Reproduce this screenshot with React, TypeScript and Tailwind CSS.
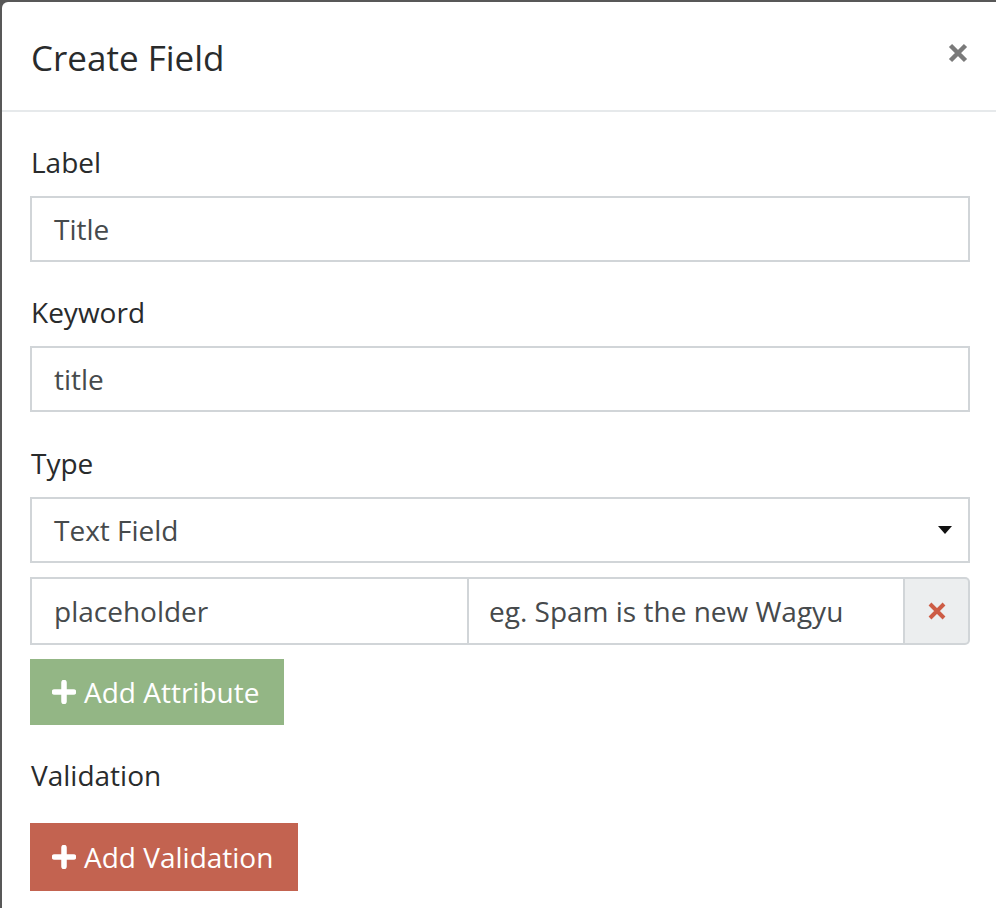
import React from 'react';

const font = { fontFamily: '"Open Sans", "Liberation Sans", sans-serif' };

const PlusIcon = () => (
  <svg width="24" height="24" viewBox="0 0 24 24" className="mr-[8px]">
    <path d="M12 2.5v19M2.5 12h19" stroke="white" strokeWidth="5.5" strokeLinecap="round" />
  </svg>
);

const Label: React.FC<{ children: React.ReactNode; className?: string }> = ({ children, className }) => (
  <div className={`text-[28px] leading-[40px] text-[#292b2c] ${className ?? ''}`}>{children}</div>
);

const TextInput: React.FC<{ value: string }> = ({ value }) => (
  <div className="h-[66px] border-2 border-[#d1d5d8] bg-white px-[22px] flex items-center text-[28px] text-[#464a4c]">
    {value}
  </div>
);

export default function App() {
  return (
    <div className="h-[908px] w-[996px] overflow-hidden bg-[#585858] pt-[2px] pl-[2px]" style={font}>
      <div className="h-[920px] w-[1000px] bg-white rounded-tl-[6px] rounded-tr-[6px]">
        {/* Header */}
        <div className="h-[110px] border-b-2 border-[#e6e9eb] flex items-center justify-between pl-[29px] pr-[30px]">
          <h4 className="text-[35px] text-[#292b2c] leading-none mt-[2px]">Create Field</h4>
          <svg width="20" height="20" viewBox="0 0 20 20" className="-mt-[6px] mr-[4px]">
            <path d="M2.5 2.5l15 15M17.5 2.5l-15 15" stroke="#7a7a7a" strokeWidth="4.5" />
          </svg>
        </div>

        {/* Body */}
        <div className="pl-[28px] pr-[28px] w-[996px] pt-[30px]">
          <Label className="mb-[14px] pl-[1px]">Label</Label>
          <TextInput value="Title" />

          <Label className="mt-[30px] mb-[14px] pl-[1px]">Keyword</Label>
          <TextInput value="title" />

          <Label className="mt-[31px] mb-[14px] pl-[1px]">Type</Label>
          <div className="h-[66px] border-2 border-[#d1d5d8] bg-white pl-[22px] pr-[16px] flex items-center justify-between text-[28px] text-[#464a4c]">
            <span>Text Field</span>
            <svg width="14" height="8" viewBox="0 0 14 8">
              <path d="M0 0h14L7 8z" fill="#111" />
            </svg>
          </div>

          <div className="mt-[14px] flex h-[68px]">
            <div className="w-[439px] border-2 border-[#d1d5d8] px-[22px] flex items-center text-[28px] text-[#464a4c]">
              placeholder
            </div>
            <div className="flex-1 border-2 border-l-0 border-[#d1d5d8] px-[20px] flex items-center text-[28px] text-[#464a4c]">
              eg. Spam is the new Wagyu
            </div>
            <div className="w-[65px] border-2 border-l-0 border-[#d1d5d8] bg-[#eceeef] rounded-r-[5px] flex items-center justify-center">
              <svg width="18" height="18" viewBox="0 0 18 18">
                <path d="M2 2l14 14M16 2L2 16" stroke="#cd5c45" strokeWidth="4" />
              </svg>
            </div>
          </div>

          <button className="mt-[14px] h-[66px] w-[254px] bg-[#93b685] text-white text-[28px] flex items-center pl-[22px]">
            <PlusIcon />
            <span>Add Attribute</span>
          </button>

          <Label className="mt-[30px] pl-[1px]">Validation</Label>

          <button className="mt-[28px] h-[68px] w-[268px] bg-[#c36350] text-white text-[28px] flex items-center pl-[22px]">
            <PlusIcon />
            <span>Add Validation</span>
          </button>
        </div>
      </div>
    </div>
  );
}
